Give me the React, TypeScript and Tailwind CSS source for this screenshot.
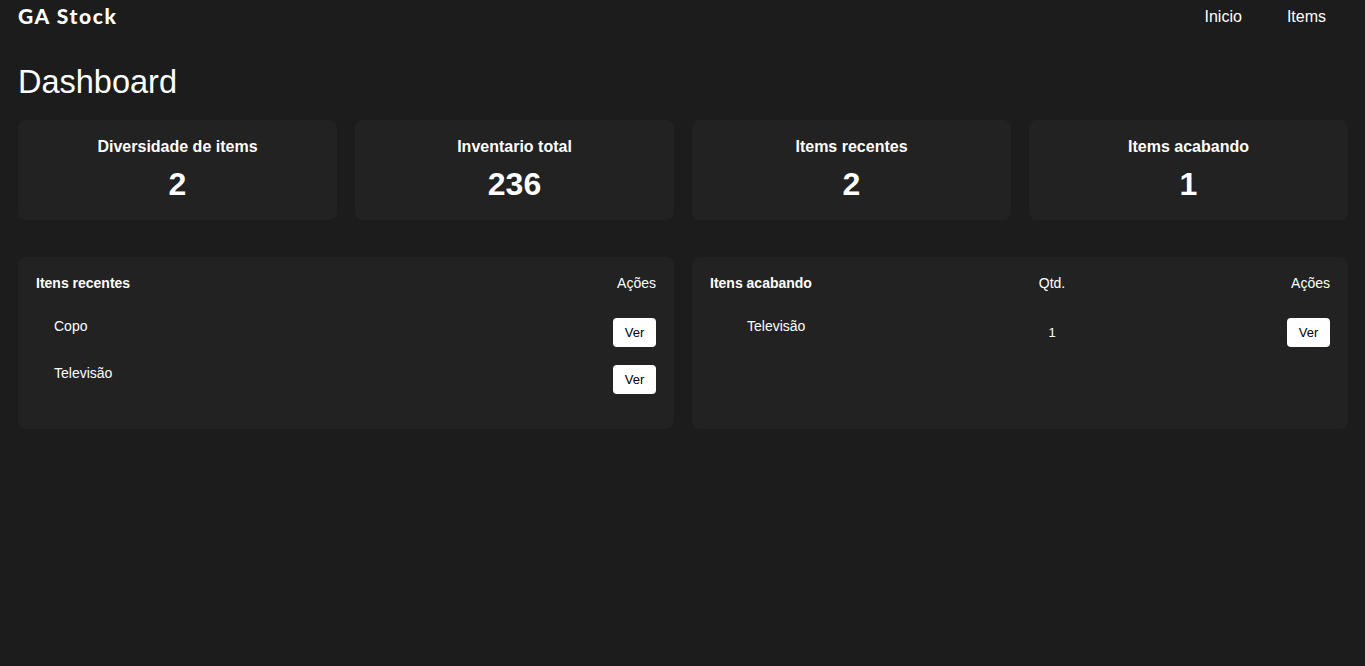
import React from "react";

const font = { fontFamily: '"Liberation Sans", Arial, sans-serif' };

function Stat({ title, value }: { title: string; value: string }) {
  return (
    <div className="flex flex-col items-center rounded-[8px] bg-[#222222] pt-[17px] pb-[18px]">
      <div className="text-[16px] font-bold leading-5 text-white">{title}</div>
      <div className="mt-[9px] text-[32px] font-bold leading-9 text-white">{value}</div>
    </div>
  );
}

function VerButton() {
  return (
    <button className="h-[29px] w-[43px] rounded-[4px] bg-white text-[13px] text-black">Ver</button>
  );
}

export default function App() {
  return (
    <div className="min-h-[666px] w-full bg-[#1c1c1c] text-white" style={font}>
      <header className="flex h-[34px] items-center justify-between pl-[18px] pr-[39px]">
        <div
          className="pb-[3px] text-[21px] font-black leading-none tracking-[1.6px] text-white"
          style={{ fontFamily: '"Lato", "Open Sans", sans-serif' }}
        >
          GA Stock
        </div>
        <nav className="flex gap-[45px] text-[16px]">
          <span>Inicio</span>
          <span>Items</span>
        </nav>
      </header>
      <main className="pl-[18px] pr-[17px]">
        <h1 className="mt-[29px] text-[32.5px] leading-[38px]">Dashboard</h1>
        <div className="mt-[19px] grid grid-cols-4 gap-[18px]">
          <Stat title="Diversidade de items" value="2" />
          <Stat title="Inventario total" value="236" />
          <Stat title="Items recentes" value="2" />
          <Stat title="Items acabando" value="1" />
        </div>
        <div className="mt-[37px] grid grid-cols-2 gap-[18px]">
          <div className="rounded-[8px] bg-[#222222] px-[18px] pt-[16px] pb-[35px]">
            <div className="flex h-[20px] items-center justify-between text-[14px]">
              <span className="font-bold">Itens recentes</span>
              <span>Ações</span>
            </div>
            <div className="mt-[25px] flex flex-col gap-[18px]">
              {["Copo", "Televisão"].map((n) => (
                <div key={n} className="flex items-start justify-between">
                  <span className="pl-[18px] text-[14px] leading-4">{n}</span>
                  <VerButton />
                </div>
              ))}
            </div>
          </div>
          <div className="rounded-[8px] bg-[#222222] px-[18px] pt-[16px] pb-[35px]">
            <div className="flex h-[20px] items-center text-[14px]">
              <span className="w-[312px] font-bold">Itens acabando</span>
              <span className="w-[60px] text-center">Qtd.</span>
              <span className="flex-1 text-right">Ações</span>
            </div>
            <div className="mt-[25px] flex flex-col gap-[18px]">
              <div className="flex items-start">
                <span className="w-[312px] pl-[37px] text-[14px] leading-4">Televisão</span>
                <span className="flex h-[29px] w-[60px] items-center justify-center text-[13px]">1</span>
                <div className="flex flex-1 justify-end">
                  <VerButton />
                </div>
              </div>
            </div>
          </div>
        </div>
      </main>
    </div>
  );
}
